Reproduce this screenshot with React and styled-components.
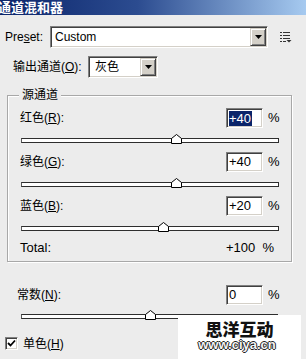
import React from 'react';
import styled, { createGlobalStyle } from 'styled-components';

const Global = createGlobalStyle`
  html, body { margin: 0; padding: 0; background: #ececec; }
  body {
    font-family: "Liberation Sans", "Noto Sans CJK SC", sans-serif;
    font-size: 12px;
    color: #000;
    overflow: hidden;
  }
  u { text-decoration: underline; text-underline-offset: 1px; }
`;

const Window = styled.div`
  position: relative;
  width: 306px;
  height: 359px;
  overflow: hidden;
  background: #ececec;
`;

const TitleBar = styled.div`
  height: 15px;
  background: linear-gradient(to right, #0a246a 0%, #2c4c90 45%, #a6caf0 100%);
  color: #fff;
  font-family: "Noto Sans CJK SC", sans-serif;
  font-weight: 700;
  font-size: 13px;
  line-height: 14px;
  text-indent: -2px;
  white-space: nowrap;
`;

const Row = styled.div`
  display: flex;
  align-items: center;
  height: 22px;
  margin-top: ${p => p.$top}px;
  padding-left: ${p => p.$left}px;
`;

const Label = styled.div`
  width: ${p => p.$w}px;
  flex: none;
  line-height: 16px;
  white-space: nowrap;
`;

const Combo = styled.div`
  box-sizing: border-box;
  width: ${p => p.$w}px;
  height: 22px;
  display: flex;
  align-items: stretch;
  background: #fff;
  border: 1px solid;
  border-color: #808080 #ffffff #ffffff #808080;
  box-shadow: inset 1px 1px 0 #404040, inset -1px -1px 0 #d4d0c8;
  padding: 1px;
`;

const ComboText = styled.div`
  flex: 1;
  display: flex;
  align-items: center;
  padding-left: ${p => p.$pad}px;
  line-height: 16px;
  font-size: 12px;
`;

const ComboButton = styled.div`
  box-sizing: border-box;
  width: 16px;
  flex: none;
  display: flex;
  align-items: center;
  justify-content: center;
  background: #d4d0c8;
  border: 1px solid;
  border-color: #d4d0c8 #404040 #404040 #d4d0c8;
  box-shadow: inset 1px 1px 0 #fff, inset -1px -1px 0 #808080;
`;

const MenuIcon = styled.svg`
  margin-left: 12px;
  flex: none;
`;

const GroupBox = styled.div`
  position: relative;
  margin: 17px 14px 0 7px;
  padding: 12px 0 5px 0;
  border: 1px solid #a8a8a8;
  box-shadow: inset 1px 1px 0 #fff, 1px 1px 0 #fff;
`;

const Legend = styled.div`
  position: absolute;
  top: -9px;
  left: 11px;
  padding: 0 3px;
  background: #ececec;
  line-height: 16px;
`;

const ValueRow = styled.div`
  display: grid;
  grid-template-columns: 1fr 37px 11px;
  column-gap: 5px;
  align-items: center;
  height: ${p => p.$h || 20}px;
  margin-top: ${p => p.$top || 0}px;
  padding: 0 ${p => p.$right}px 0 ${p => p.$left}px;
`;

const NumBox = styled.div`
  box-sizing: border-box;
  height: 20px;
  background: #fff;
  border: 1px solid;
  border-color: #808080 #ffffff #ffffff #808080;
  box-shadow: inset 1px 1px 0 #404040, inset -1px -1px 0 #d4d0c8;
  padding: 0 0 0 2px;
  display: flex;
  align-items: center;
  font-size: 13px;
  line-height: 16px;
`;

const Selected = styled.span`
  background: #0a246a;
  color: #fff;
  padding: 0 1px 0 0;
  line-height: 15px;
`;

const Pct = styled.div`
  font-size: 13px;
  line-height: 16px;
`;

const TotalLabel = styled.div`
  font-size: 13px;
  line-height: 16px;
`;

const TotalValue = styled.div`
  grid-column: 2 / span 2;
  font-size: 13px;
  line-height: 16px;
  white-space: pre;
`;

const Track = styled.div`
  position: relative;
  box-sizing: border-box;
  height: 5px;
  background: #fff;
  border: 1px solid #2e2e2e;
  border-left-color: #5a5a5a;
  margin: ${p => p.$margin};
`;

const Thumb = styled.svg`
  position: absolute;
  top: -5px;
  display: block;
`;

const CheckRow = styled.div`
  display: flex;
  align-items: center;
  height: 13px;
  margin-top: 18px;
  padding-left: 5px;
`;

const CheckBox = styled.div`
  box-sizing: border-box;
  width: 13px;
  height: 13px;
  background: #fff;
  border: 1px solid;
  border-color: #808080 #ffffff #ffffff #808080;
  box-shadow: inset 1px 1px 0 #404040, inset -1px -1px 0 #d4d0c8;
  display: flex;
  align-items: center;
  justify-content: center;
`;

const CheckLabel = styled.div`
  margin-left: 5px;
  line-height: 16px;
`;

const Watermark = styled.div`
  position: absolute;
  right: 5px;
  bottom: 0;
  width: 123px;
  height: 44px;
  background: #fff;
  display: flex;
  flex-direction: column;
  align-items: center;
  padding-top: 5px;
  box-sizing: border-box;
`;

const WmTitle = styled.div`
  font-family: "Noto Sans CJK SC", sans-serif;
  font-weight: 900;
  font-size: 17px;
  line-height: 17px;
  height: 17px;
  color: #111;
`;

const WmUrl = styled.div`
  font-family: "Liberation Sans", sans-serif;
  font-weight: 700;
  font-size: 13px;
  line-height: 13px;
  height: 13px;
  margin-top: 1px;
  color: #f4f4f4;
  text-shadow: 1px 0 0 #222, -1px 0 0 #222, 0 1px 0 #222, 0 -1px 0 #222;
  margin-left: -5px;
`;

const Arrow = () => (
  <svg width="7" height="4" viewBox="0 0 7 4">
    <path d="M0 0 H7 L3.5 4 Z" fill="#000" />
  </svg>
);

const SliderTrack = ({ pct, margin }) => (
  <Track $margin={margin}>
    <Thumb width="11" height="10" viewBox="0 0 11 10" style={{ left: `calc(${pct}% - 5px)` }}>
      <path d="M0.5 9.5 V4.5 L5.5 0.5 L10.5 4.5 V9.5 Z" fill="#fff" stroke="#000" strokeWidth="1" />
    </Thumb>
  </Track>
);

const channels = [
  { label: '红色', key: 'R', value: '+40', pct: 60, selected: true },
  { label: '绿色', key: 'G', value: '+40', pct: 60 },
  { label: '蓝色', key: 'B', value: '+20', pct: 55 },
];

export default function App() {
  return (
    <Window>
      <Global />
      <TitleBar>通道混和器</TitleBar>

      <Row $top={11} $left={5}>
        <Label $w={45}>Pre<u>s</u>et:</Label>
        <Combo $w={218}>
          <ComboText $pad={3}>Custom</ComboText>
          <ComboButton><Arrow /></ComboButton>
        </Combo>
        <MenuIcon width="12" height="11" viewBox="0 0 12 11">
          <rect x="0" y="0" width="2" height="1" fill="#333" />
          <rect x="3" y="0" width="7" height="1" fill="#333" />
          <rect x="0" y="3" width="2" height="1" fill="#333" />
          <rect x="3" y="3" width="7" height="1" fill="#333" />
          <rect x="0" y="6" width="2" height="1" fill="#333" />
          <rect x="3" y="6" width="7" height="1" fill="#333" />
          <rect x="0" y="9" width="2" height="1" fill="#333" />
          <rect x="3" y="9" width="3" height="1" fill="#333" />
          <path d="M6.5 8 H11.5 L9 10.5 Z" fill="#333" />
        </MenuIcon>
      </Row>

      <Row $top={8} $left={13}>
        <Label $w={75}>输出通道(<u>O</u>):</Label>
        <Combo $w={70}>
          <ComboText $pad={5}>灰色</ComboText>
          <ComboButton><Arrow /></ComboButton>
        </Combo>
      </Row>

      <GroupBox>
        <Legend>源通道</Legend>
        {channels.map(c => (
          <div key={c.key}>
            <ValueRow $left={12} $right={12}>
              <Label>{c.label}(<u>{c.key}</u>):</Label>
              <NumBox>{c.selected ? <Selected>{c.value}</Selected> : c.value}</NumBox>
              <Pct>%</Pct>
            </ValueRow>
            <SliderTrack pct={c.pct} margin="10px 12px 9px 13px" />
          </div>
        ))}
        <ValueRow $left={12} $right={12} $h={16} $top={8}>
          <TotalLabel>Total:</TotalLabel>
          <TotalValue>+100  %</TotalValue>
        </ValueRow>
      </GroupBox>

      <ValueRow $left={17} $right={27} $top={23}>
        <Label>常数(<u>N</u>):</Label>
        <NumBox>0</NumBox>
        <Pct>%</Pct>
      </ValueRow>
      <SliderTrack pct={50} margin="9px 28px 0 21px" />

      <CheckRow>
        <CheckBox>
          <svg width="9" height="9" viewBox="0 0 9 9">
            <path d="M1 4 L3.5 6.5 L8 1.5" fill="none" stroke="#000" strokeWidth="1.8" />
          </svg>
        </CheckBox>
        <CheckLabel>单色(<u>H</u>)</CheckLabel>
      </CheckRow>

      <Watermark>
        <WmTitle>思洋互动</WmTitle>
        <WmUrl>www.ciya.cn</WmUrl>
      </Watermark>
    </Window>
  );
}
